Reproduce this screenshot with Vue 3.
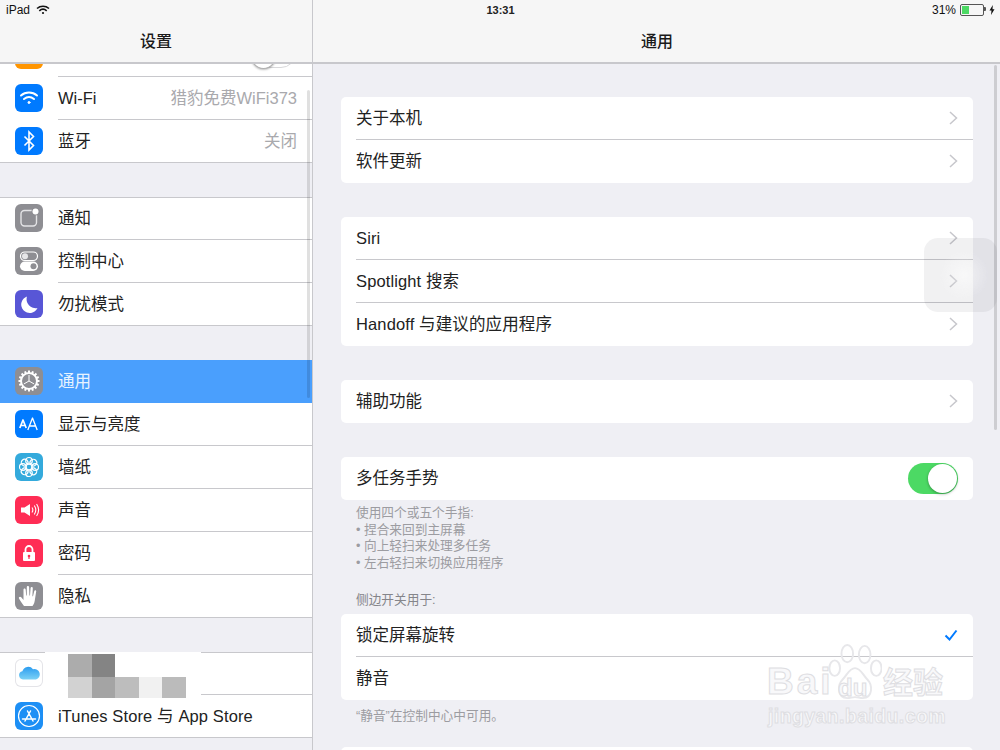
<script setup>
const sideGroups = [
  [
    { id: 'wifi', label: 'Wi-Fi', value: '猎豹免费WiFi373', bg: '#007aff' },
    { id: 'bt', label: '蓝牙', value: '关闭', bg: '#007aff' },
  ],
  [
    { id: 'notify', label: '通知', bg: '#8e8e93' },
    { id: 'control', label: '控制中心', bg: '#8e8e93' },
    { id: 'moon', label: '勿扰模式', bg: '#5856d6' },
  ],
  [
    { id: 'gear', label: '通用', bg: '#8e8e93', selected: true },
    { id: 'aa', label: '显示与亮度', bg: '#007aff' },
    { id: 'flower', label: '墙纸', bg: '#34aadc' },
    { id: 'sound', label: '声音', bg: '#ff2d55' },
    { id: 'lock', label: '密码', bg: '#ff2d55' },
    { id: 'hand', label: '隐私', bg: '#8e8e93' },
  ],
  [
    { id: 'cloud', label: '', bg: '#fff' },
    { id: 'store', label: 'iTunes Store 与 App Store', bg: '#1d8ff5' },
  ],
]
const petals = [0, 45, 90, 135, 180, 225, 270, 315]
const mosaic = ['#acacac', '#848484', '#fff', '#fff', '#fff', '#d2d2d2', '#a4a4a4', '#bdbdbd', '#f1f1f1', '#bbbbbb']
const gears = Array.from({ length: 16 }, (_, i) => i * 22.5)
</script>

<template>
  <div class="screen">
    <aside class="side">
      <header class="bar"><h1>设置</h1></header>
      <div class="side-list">
        <div class="peek">
          <span class="peek-icon"></span>
          <span class="peek-toggle"><i></i></span>
        </div>
        <section v-for="(group, gi) in sideGroups" :key="gi" class="side-group">
          <div v-for="item in group" :key="item.id" class="side-row" :class="{ selected: item.selected }">
            <span class="icon" :class="{ outlined: item.id === 'cloud' }" :style="{ background: item.bg }">
              <svg viewBox="0 0 28 28" width="28" height="28">
                <g v-if="item.id === 'wifi'" fill="none" stroke="#fff" stroke-width="2" stroke-linecap="round">
                  <path d="M6 11.500c4.500-4 11.500-4 16 0" />
                  <path d="M9 15c3-2.500 7-2.500 10 0" />
                  <circle cx="14" cy="18.500" r="1" fill="#fff" stroke-width="1" />
                </g>
                <path v-else-if="item.id === 'bt'" d="M9.500 9.500l9 9-4.500 4.500V5l4.500 4.500-9 9" fill="none" stroke="#fff" stroke-width="1.600" />
                <g v-else-if="item.id === 'notify'">
                  <rect x="6" y="6.500" width="15.500" height="15.500" rx="3.500" fill="none" stroke="#e4e4e6" stroke-width="1.400" />
                  <circle cx="20.500" cy="7.500" r="4" fill="#8e8e93" />
                  <circle cx="20.500" cy="7.500" r="3" fill="#fff" />
                </g>
                <g v-else-if="item.id === 'control'">
                  <rect x="5.500" y="5" width="17" height="8.500" rx="4.250" fill="none" stroke="#fff" stroke-width="1.200" />
                  <circle cx="10" cy="9.250" r="3" fill="#e6e6e8" />
                  <rect x="5" y="14.500" width="18" height="9.500" rx="4.750" fill="#fff" />
                  <circle cx="18.500" cy="19.250" r="3" fill="#8e8e93" />
                </g>
                <path v-else-if="item.id === 'moon'" d="M12 6.500a8.500 8.500 0 1 0 10.500 11.500 9 9 0 0 1-10.500-11.500z" fill="#fff" />
                <g v-else-if="item.id === 'gear'">
                  <rect v-for="a in gears" :key="a" x="13" y="3.500" width="2" height="3" fill="#fff" :transform="`rotate(${a} 14 14)`" />
                  <circle cx="14" cy="14" r="8" fill="none" stroke="#fff" stroke-width="2" />
                  <path d="M14 14V8M14 14l-5.200 3M14 14l5.200 3" stroke="#fff" stroke-width="1" />
                </g>
                <g v-else-if="item.id === 'aa'" fill="none" stroke="#fff" stroke-linejoin="round">
                  <path d="M4.800 18l3.200-8 3.200 8M6 15.500h4" stroke-width="1.700" />
                  <path d="M12.800 20l4.700-12 4.700 12M14.500 16h6" stroke-width="1.300" />
                </g>
                <g v-else-if="item.id === 'flower'" fill="none" stroke="#fff" stroke-width="1.200">
                  <circle v-for="a in petals" :key="a" cx="14" cy="7.800" r="3.300" :transform="`rotate(${a} 14 14)`" />
                  <circle cx="14" cy="14" r="3" />
                </g>
                <g v-else-if="item.id === 'sound'">
                  <path d="M6 11.500h3.500L15 8v12l-5.500-3.500H6z" fill="#fff" />
                  <path d="M17 11.500c1 1.500 1 3.500 0 5M19.300 9.500c1.800 2.700 1.800 6.300 0 9M21.600 8c2.400 3.600 2.400 8.400 0 12" fill="none" stroke="#fff" stroke-width="1.100" />
                </g>
                <g v-else-if="item.id === 'lock'">
                  <path d="M10.500 13v-2.500a3.500 3.500 0 0 1 7 0V13" fill="none" stroke="#fff" stroke-width="1.800" />
                  <rect x="8" y="13" width="12" height="9" rx="1" fill="#fff" />
                  <circle cx="14" cy="17" r="1.300" fill="#ff2d55" />
                  <rect x="13.400" y="17.500" width="1.200" height="2.500" fill="#ff2d55" />
                </g>
                <path v-else-if="item.id === 'hand'" d="M9 24c-1.500-2-4-5.500-5-7.500-.7-1.500 1.200-2.500 2.200-1.200L8.500 18V7.500c0-1.500 2-1.500 2.200 0l.5 6h.6V5c0-1.500 2.200-1.500 2.300 0l.3 8.500h.6l.6-7.500c.2-1.500 2.200-1.300 2.200.2l-.4 8h.6l1.200-5c.4-1.400 2.200-1 2 .4L20 17c-.3 3-1 5-2.500 7z" fill="#fff" />
                <g v-else-if="item.id === 'cloud'">
                  <defs>
                    <linearGradient id="cloudFill" x1="0" y1="0" x2="0" y2="1">
                      <stop offset="0" stop-color="#2b9cf0" />
                      <stop offset="1" stop-color="#7cd2f6" />
                    </linearGradient>
                  </defs>
                  <path d="M8 20.500a4.200 4.200 0 0 1-.6-8.300A6 6 0 0 1 18 10.300a5.200 5.200 0 0 1 3 10.200z" fill="url(#cloudFill)" />
                </g>
                <g v-else-if="item.id === 'store'" fill="none" stroke="#fff">
                  <circle cx="14" cy="14" r="10.500" stroke-width="1.200" />
                  <path d="M10 19l5.500-10M18 19l-5.500-10M7.500 17h13" stroke-width="1.500" stroke-linecap="round" />
                </g>
              </svg>
            </span>
            <span class="side-label" :class="{ latin: item.id === 'store' }">{{ item.label }}</span>
            <span v-if="item.value" class="side-value">{{ item.value }}</span>
          </div>
        </section>
      </div>
      <div class="mosaic">
        <i v-for="(c, i) in mosaic" :key="i" :style="{ background: c }"></i>
      </div>
      <span class="side-scroll"></span>
    </aside>

    <main class="main">
      <header class="bar"><h1>通用</h1></header>
      <div class="content">
        <section class="card">
          <div class="row"><span>关于本机</span><svg class="chev" viewBox="0 0 9 14"><path d="M1 1l6.500 6L1 13" /></svg></div>
          <div class="row"><span>软件更新</span><svg class="chev" viewBox="0 0 9 14"><path d="M1 1l6.500 6L1 13" /></svg></div>
        </section>
        <section class="card">
          <div class="row"><span class="latin">Siri</span><svg class="chev" viewBox="0 0 9 14"><path d="M1 1l6.500 6L1 13" /></svg></div>
          <div class="row"><span class="latin">Spotlight 搜索</span><svg class="chev" viewBox="0 0 9 14"><path d="M1 1l6.500 6L1 13" /></svg></div>
          <div class="row"><span class="latin">Handoff 与建议的应用程序</span><svg class="chev" viewBox="0 0 9 14"><path d="M1 1l6.500 6L1 13" /></svg></div>
        </section>
        <section class="card">
          <div class="row"><span>辅助功能</span><svg class="chev" viewBox="0 0 9 14"><path d="M1 1l6.500 6L1 13" /></svg></div>
        </section>
        <section class="card tight">
          <div class="row"><span>多任务手势</span><span class="toggle"><i></i></span></div>
        </section>
        <p class="note">使用四个或五个手指:<br />• 捏合来回到主屏幕<br />• 向上轻扫来处理多任务<br />• 左右轻扫来切换应用程序</p>
        <p class="label">侧边开关用于:</p>
        <section class="card tight">
          <div class="row"><span>锁定屏幕旋转</span><svg class="check" viewBox="0 0 14 12"><path d="M1.500 6.500l4 4L12.500 1.500" /></svg></div>
          <div class="row"><span>静音</span></div>
        </section>
        <p class="note single">“静音”在控制中心中可用。</p>
        <section class="card"><div class="row"></div></section>
      </div>
      <span class="main-scroll"></span>
    </main>

    <div class="status">
      <div class="status-left">
        <span>iPad</span>
        <svg viewBox="0 0 14 10" width="14" height="10" fill="none" stroke="#111" stroke-width="1.600">
          <path d="M1 3.500c3.400-3 8.600-3 12 0M3.300 5.800c2.200-1.900 5.200-1.900 7.400 0" />
          <circle cx="7" cy="8" r="1.100" fill="#111" stroke="none" />
        </svg>
      </div>
      <div class="status-time">13:31</div>
      <div class="status-right">
        <span>31%</span>
        <span class="battery"><i></i></span>
        <svg viewBox="0 0 6 10" width="6" height="10"><path d="M3.800 0L.5 5.600h2L2 10l3.500-5.800h-2z" fill="#111" /></svg>
      </div>
    </div>

    <div class="assist"></div>

    <div class="mark">
      <svg class="paw" viewBox="0 0 54 60">
        <g fill="none" stroke="#e7e7ea" stroke-width="2">
          <ellipse cx="19" cy="11" rx="6" ry="9" />
          <ellipse cx="37" cy="12" rx="6" ry="9" />
          <ellipse cx="6" cy="26" rx="5.500" ry="8" />
          <ellipse cx="49" cy="26" rx="5.500" ry="8" />
          <path d="M27 26c-6 0-8 7-13 12-5 5-6 19 5 19 3 0 5-1 8-1s5 1 8 1c11 0 10-14 5-19-5-5-7-12-13-12z" />
        </g>
      </svg>
      <span class="mark-bai">Bai</span>
      <span class="mark-du">du</span>
      <span class="mark-cn">经验</span>
      <span class="mark-url">jingyan.baidu.com</span>
    </div>
  </div>
</template>

<style>
html, body { margin: 0; padding: 0; background: #efeff4; }
body { width: 1000px; height: 750px; overflow: hidden; }
</style>

<style scoped>
.screen {
  position: relative;
  display: flex;
  width: 1000px;
  height: 750px;
  overflow: hidden;
  background: #efeff4;
  color: #222;
  font-family: "Liberation Sans", "Noto Sans CJK SC", sans-serif;
}
.side {
  position: relative;
  flex: 0 0 312px;
  height: 750px;
  display: flex;
  flex-direction: column;
  border-right: 1px solid #c8c8cc;
  overflow: hidden;
}
.main {
  position: relative;
  flex: 1;
  height: 750px;
  display: flex;
  flex-direction: column;
  overflow: hidden;
}
.bar {
  position: relative;
  z-index: 2;
  flex: 0 0 64px;
  height: 64px;
  box-sizing: border-box;
  padding-top: 33px;
  background: #f6f6f6;
  border-bottom: 2px solid #c8c8cc;
}
.bar h1 {
  margin: 0;
  height: 18px;
  line-height: 18px;
  text-align: center;
  font-size: 16px;
  font-weight: 500;
  color: #1a1a1a;
}
.main .bar h1 { padding-left: 1px; }
.side-list { flex: 1; min-height: 0; }
.peek {
  position: relative;
  height: 13px;
  background: #fff;
  overflow: hidden;
}
.peek::after {
  content: "";
  position: absolute;
  left: 58px;
  right: 0;
  bottom: 0;
  height: 1px;
  background: #c8c8cc;
}
.peek-icon {
  position: absolute;
  left: 15px;
  top: -23px;
  width: 28px;
  height: 28px;
  border-radius: 6px;
  background: #ff9500;
}
.peek-toggle {
  position: absolute;
  left: 250px;
  top: -26px;
  width: 46px;
  height: 30px;
  box-sizing: border-box;
  border: 1px solid #d8d8da;
  border-radius: 15px;
}
.peek-toggle i {
  position: absolute;
  left: -1px;
  top: -1px;
  width: 27px;
  height: 31px;
  box-sizing: border-box;
  border: 1px solid #b0b0b0;
  border-radius: 50%;
  background: #fff;
  box-shadow: 0 1px 2px rgba(0, 0, 0, 0.25);
}
.side-group {
  background: #fff;
  box-shadow: inset 0 -1px 0 #c8c8cc, inset 0 1px 0 #c8c8cc;
  margin-bottom: 34px;
}
.side-group:first-of-type { box-shadow: inset 0 -1px 0 #c8c8cc; }
.side-row {
  position: relative;
  display: flex;
  align-items: center;
  height: 43px;
  box-sizing: border-box;
  padding: 0 15px 1px;
  font-size: 16.500px;
  line-height: 20px;
}
.side-row + .side-row::before {
  content: "";
  position: absolute;
  left: 58px;
  right: 0;
  top: -1px;
  height: 1px;
  background: #c8c8cc;
}
.side-row.selected { background: #4a9ffd; color: #e8f3ff; }
.side-row.selected + .side-row::before { display: none; }
.icon {
  flex: 0 0 28px;
  width: 28px;
  height: 28px;
  border-radius: 6px;
  overflow: hidden;
}
.icon svg { display: block; }
.icon.outlined { box-shadow: inset 0 0 0 1px #e4e4e8; }
.side-label { margin-left: 15px; }
.latin { letter-spacing: 0.120px; }
.side-value { margin-left: auto; color: #a9a9ad; }
.mosaic {
  position: absolute;
  left: 45px;
  top: 652px;
  width: 156px;
  height: 46px;
  padding: 2px 15px 0 23px;
  box-sizing: border-box;
  background: #fff;
  display: grid;
  grid-template-columns: repeat(5, 23.500px);
  grid-template-rows: 23px 21px;
}
.side-scroll {
  position: absolute;
  left: 307px;
  top: 90px;
  width: 3px;
  height: 308px;
  border-radius: 2px;
  background: rgba(0, 0, 0, 0.12);
  z-index: 3;
}
.content {
  flex: 1;
  min-height: 0;
  padding: 33px 27px 0 28px;
}
.card {
  background: #fff;
  border-radius: 5px;
  margin-bottom: 34px;
}
.card.tight { margin-bottom: 0; }
.row {
  position: relative;
  display: flex;
  align-items: center;
  justify-content: space-between;
  height: 43px;
  box-sizing: border-box;
  padding: 0 15px 1px;
  font-size: 16.500px;
  line-height: 20px;
}
.row + .row::before {
  content: "";
  position: absolute;
  left: 15px;
  right: 0;
  top: -1px;
  height: 1px;
  background: #c8c8cc;
}
.chev {
  width: 9px;
  height: 14px;
  fill: none;
  stroke: #c7c7cc;
  stroke-width: 1.500;
}
.check {
  width: 14px;
  height: 12px;
  fill: none;
  stroke: #007aff;
  stroke-width: 2;
}
.toggle {
  position: relative;
  width: 50px;
  height: 31px;
  border-radius: 16px;
  background: #4cd964;
}
.toggle i {
  position: absolute;
  right: 1px;
  top: 1px;
  width: 29px;
  height: 29px;
  border-radius: 50%;
  background: #fff;
  box-shadow: 0 1px 3px rgba(0, 0, 0, 0.35);
}
.note {
  margin: 5px 0 0;
  padding-left: 15px;
  font-size: 12.700px;
  line-height: 16.500px;
  color: #9c9ca1;
}
.note.single { margin: 8px 0 22px; line-height: 17px; }
.label {
  margin: 21px 0 5px;
  padding-left: 15px;
  font-size: 12.700px;
  line-height: 17px;
  color: #85858a;
}
.main-scroll {
  position: absolute;
  right: 3px;
  top: 65px;
  width: 3px;
  height: 365px;
  border-radius: 2px;
  background: rgba(0, 0, 0, 0.14);
  z-index: 3;
}
.status {
  position: absolute;
  z-index: 5;
  left: 0;
  top: 0;
  width: 1000px;
  height: 20px;
  display: flex;
  align-items: center;
  justify-content: space-between;
  box-sizing: border-box;
  padding: 0 5px 0 6px;
  font-size: 12px;
  color: #111;
}
.status-left, .status-right {
  display: flex;
  align-items: center;
  gap: 6px;
  width: 150px;
}
.status-right { justify-content: flex-end; gap: 4px; }
.status-time { font-weight: 700; font-size: 11px; color: #222; }
.battery {
  position: relative;
  width: 20px;
  height: 8px;
  margin-right: 1px;
  border: 1px solid #555;
  border-radius: 2px;
  padding: 1px;
}
.battery::after {
  content: "";
  position: absolute;
  right: -3px;
  top: 2px;
  width: 2px;
  height: 4px;
  background: #555;
  border-radius: 0 1px 1px 0;
}
.battery i {
  display: block;
  width: 7px;
  height: 8px;
  background: #4cd964;
}
.assist {
  position: absolute;
  z-index: 4;
  left: 924px;
  top: 238px;
  width: 73px;
  height: 74px;
  border-radius: 14px;
  background: radial-gradient(circle at 55% 50%, rgba(255, 255, 255, 0.5), rgba(255, 255, 255, 0) 45%), rgba(60, 60, 75, 0.07);
}
.mark {
  position: absolute;
  z-index: 4;
  left: 760px;
  top: 640px;
  width: 240px;
  height: 110px;
}
.paw {
  position: absolute;
  left: 68px;
  top: 3px;
  width: 54px;
  height: 58px;
}
.mark-bai, .mark-du, .mark-cn, .mark-url {
  position: absolute;
  color: #f8f8fa;
  -webkit-text-stroke: 1px #dedee2;
  white-space: nowrap;
}
.mark-bai { left: 7px; top: 22px; font-size: 37px; line-height: 40px; font-weight: 700; letter-spacing: 3px; }
.mark-du { left: 78px; top: 36px; font-size: 24px; line-height: 24px; font-weight: 700; }
.mark-cn { left: 123px; top: 26px; font-size: 30px; line-height: 34px; font-weight: 700; }
.mark-url { left: 8px; top: 64px; font-size: 19.500px; line-height: 24px; letter-spacing: 0.400px; font-weight: 700; }
</style>
